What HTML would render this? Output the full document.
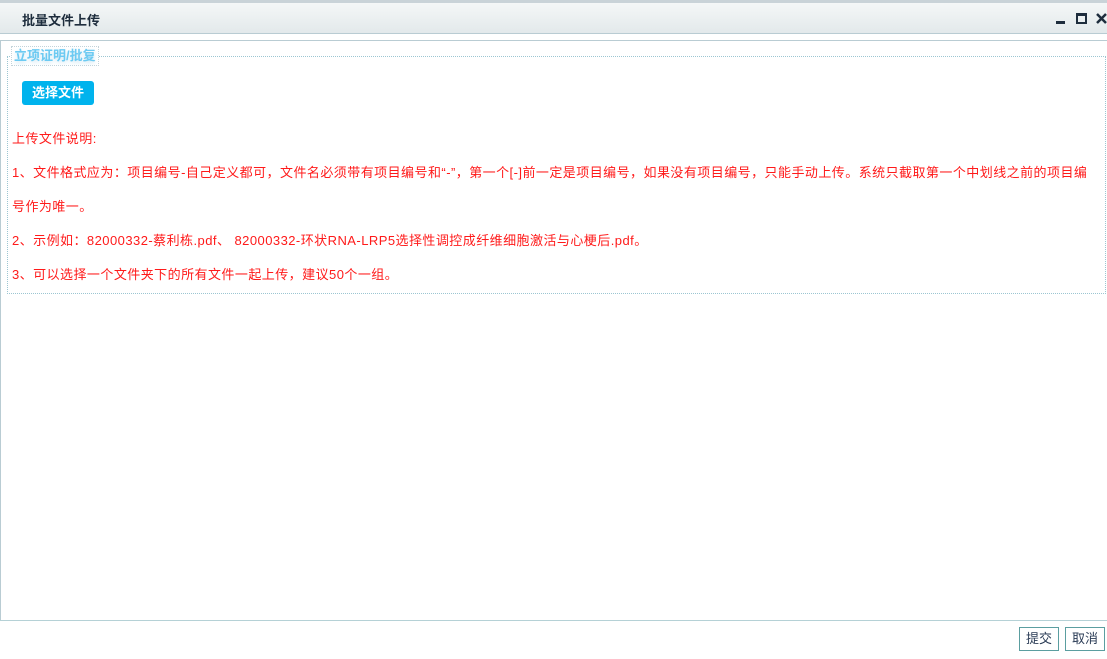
<!DOCTYPE html>
<html><head><meta charset="utf-8"><style>
body{margin:0;width:1107px;height:659px;overflow:hidden;background:#fff;font-family:"Liberation Sans","Noto Sans CJK SC",sans-serif;position:relative}
.top{position:absolute;left:0;top:0;width:1107px;height:3px;background:#c9d3d8}
.title{position:absolute;left:0;top:3px;width:1107px;height:30px;background:linear-gradient(#f4f7f7,#e3e9eb);border-bottom:1px solid #b9ccd3}
.title span{position:absolute;left:22px;top:7px;font-size:13px;font-weight:bold;color:#1e2d3d}
.body{position:absolute;left:0;top:40px;width:1106px;height:580px;border-top:1px solid #b9ccd3;border-left:1px solid #b9ccd3}
.fs{position:absolute;left:7px;top:56px;width:1097px;height:236px;border:1px dotted #9cc6d2}
.lg{position:absolute;left:11px;top:46px;padding:0 2px;font-size:13px;font-weight:bold;color:#6ccaf2;background:#fff;border:1px dotted #c3d3da;text-shadow:0 2px 4px #cfe7f3;line-height:18px}
.btn{position:absolute;left:22px;top:81px;width:72px;height:24px;background:#00b3ed;border-radius:3px;color:#fff;font-size:13px;font-weight:bold;text-align:center;line-height:24px}
.t{position:absolute;left:12px;font-size:13px;color:#ff1a1a;white-space:nowrap;letter-spacing:0.45px}
.foot{position:absolute;left:0;top:620px;width:1107px;border-top:1px solid #b5d1d6}
.b2{position:absolute;top:627px;width:38px;height:22px;border:1px solid #5b9ea0;font-size:13px;color:#2a3b55;text-align:center;line-height:22px;background:#fff}
</style></head><body>
<div class="top"></div>
<div class="title"><span>批量文件上传</span>
<div style="position:absolute;left:1056px;top:18px;width:9px;height:3px;background:#1e2d3d"></div>
<div style="position:absolute;left:1076px;top:10px;width:7px;height:6px;border:2px solid #1e2d3d;border-top-width:3px"></div>
<svg style="position:absolute;left:1096px;top:10px" width="11" height="11"><path d="M1 1L10 10M10 1L1 10" stroke="#1e2d3d" stroke-width="2.5"/></svg>
</div>
<div class="body"></div>
<div class="fs"></div>
<div class="lg">立项证明/批复</div>
<div class="btn">选择文件</div>
<div class="t" style="top:128px">上传文件说明:</div>
<div class="t" style="top:162px">1、文件格式应为：项目编号-自己定义都可，文件名必须带有项目编号和“-”，第一个[-]前一定是项目编号，如果没有项目编号，只能手动上传。系统只截取第一个中划线之前的项目编</div>
<div class="t" style="top:196px">号作为唯一。</div>
<div class="t" style="top:230px">2、示例如：82000332-蔡利栋.pdf、 82000332-环状RNA-LRP5选择性调控成纤维细胞激活与心梗后.pdf。</div>
<div class="t" style="top:264px">3、可以选择一个文件夹下的所有文件一起上传，建议50个一组。</div>
<div class="foot"></div>
<div class="b2" style="left:1019px">提交</div>
<div class="b2" style="left:1065px">取消</div>
</body></html>
